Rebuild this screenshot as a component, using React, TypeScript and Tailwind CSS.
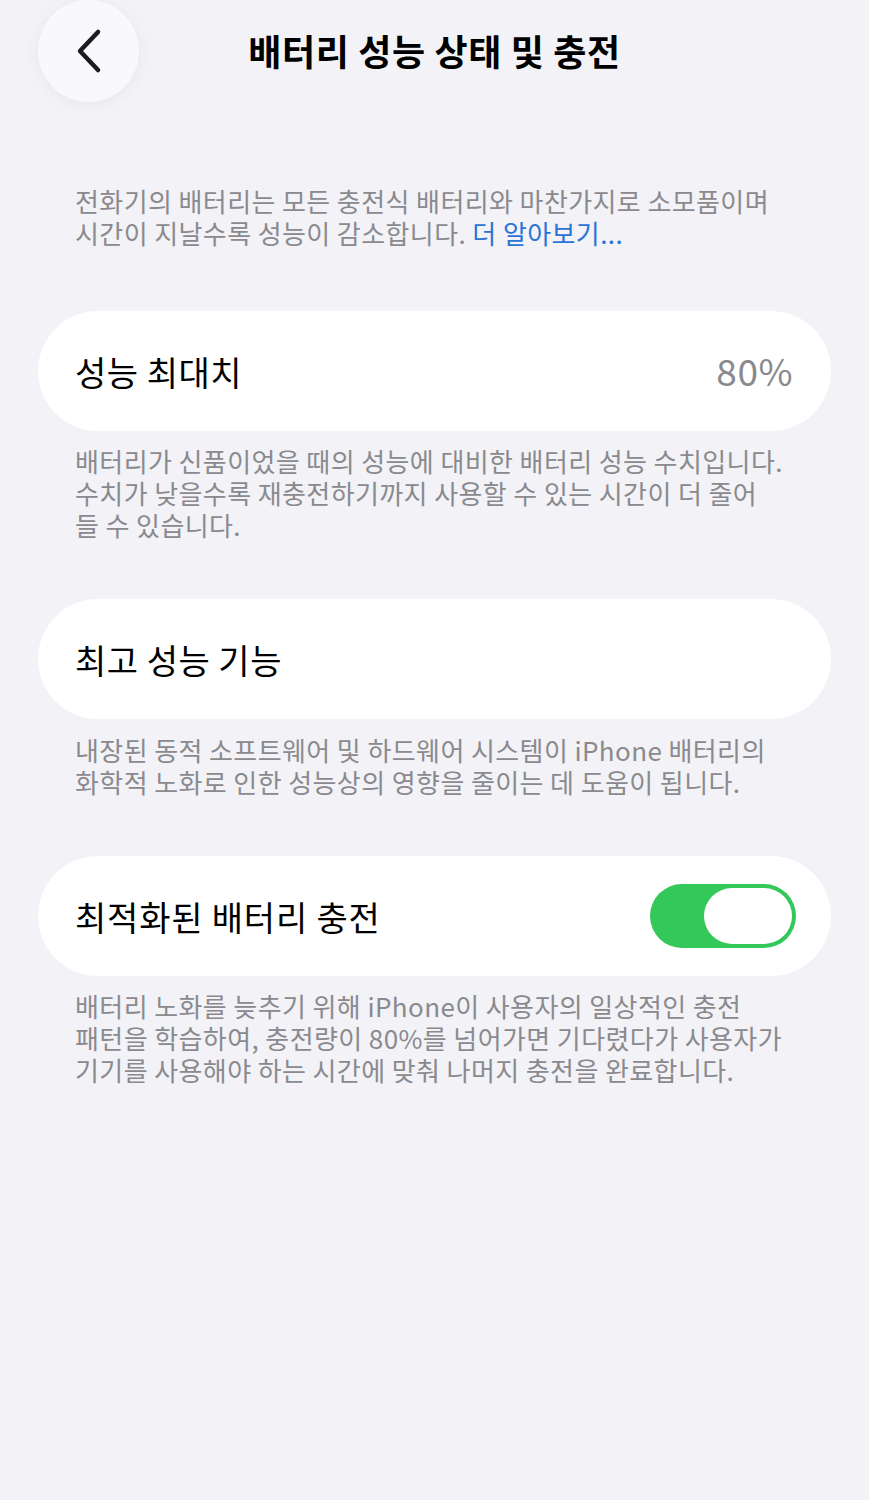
import React, { useState } from "react";

const font = { fontFamily: '"Noto Sans CJK KR", "Noto Sans", sans-serif' };

function Footer({ children }: { children: React.ReactNode }) {
  return (
    <p className="px-[75px] text-[26px] leading-[32px] text-[#8a8a8e] tracking-[0.4px]">
      {children}
    </p>
  );
}

function Card({ children, pr = "pr-[38px]" }: { children: React.ReactNode; pr?: string }) {
  return (
    <div className={"mx-[38px] h-[120px] rounded-[60px] bg-white flex items-center justify-between pl-[37px] " + pr}>
      {children}
    </div>
  );
}

function Toggle() {
  const [on, setOn] = useState(true);
  return (
    <button
      onClick={() => setOn(!on)}
      className={
        "w-[146px] h-[64px] rounded-full p-[4px] flex " +
        (on ? "bg-[#34c759] justify-end" : "bg-[#e9e9eb] justify-start")
      }
    >
      <span className="block w-[88px] h-[56px] rounded-full bg-white" />
    </button>
  );
}

export default function App() {
  return (
    <div className="min-h-[1500px] bg-[#f2f2f7] text-black" style={font}>
      <div className="relative h-[102px] flex items-center justify-center">
        <button className="absolute left-[38px] top-0 w-[101px] h-[102px] rounded-full bg-[#f9f9fb] shadow-[0_2px_16px_rgba(0,0,0,0.05)] flex items-center justify-center">
          <svg width="30" height="46" viewBox="0 0 30 46" fill="none">
            <path
              d="M24 4 L6 23 L24 42"
              stroke="#1c1c1e"
              strokeWidth="4.5"
              strokeLinecap="round"
              strokeLinejoin="round"
            />
          </svg>
        </button>
        <h1 className="text-[36px] font-bold tracking-[0.6px] -mt-[2px]">배터리 성능 상태 및 충전</h1>
      </div>

      <div className="pt-[83px]">
        <Footer>
          전화기의 배터리는 모든 충전식 배터리와 마찬가지로 소모품이며
          <br />
          시간이 지날수록 성능이 감소합니다.{" "}
          <span className="text-[#2a74d6]">더 알아보기...</span>
        </Footer>
      </div>

      <div className="mt-[62px]">
        <Card>
          <span className="text-[34px] tracking-[0.5px]">성능 최대치</span>
          <span className="text-[37px] text-[#8a8a8e] tracking-[0.5px]">80%</span>
        </Card>
      </div>

      <div className="mt-[14px]">
        <Footer>
          배터리가 신품이었을 때의 성능에 대비한 배터리 성능 수치입니다.
          <br />
          수치가 낮을수록 재충전하기까지 사용할 수 있는 시간이 더 줄어
          <br />들 수 있습니다.
        </Footer>
      </div>

      <div className="mt-[58px]">
        <Card>
          <span className="text-[34px] tracking-[0.5px]">최고 성능 기능</span>
        </Card>
      </div>

      <div className="mt-[15px]">
        <Footer>
          내장된 동적 소프트웨어 및 하드웨어 시스템이 iPhone 배터리의
          <br />
          화학적 노화로 인한 성능상의 영향을 줄이는 데 도움이 됩니다.
        </Footer>
      </div>

      <div className="mt-[58px]">
        <Card pr="pr-[35px]">
          <span className="text-[34px] tracking-[0.8px]">최적화된 배터리 충전</span>
          <Toggle />
        </Card>
      </div>

      <div className="mt-[14px]">
        <Footer>
          배터리 노화를 늦추기 위해 iPhone이 사용자의 일상적인 충전
          <br />
          패턴을 학습하여, 충전량이 80%를 넘어가면 기다렸다가 사용자가
          <br />
          기기를 사용해야 하는 시간에 맞춰 나머지 충전을 완료합니다.
        </Footer>
      </div>
    </div>
  );
}
